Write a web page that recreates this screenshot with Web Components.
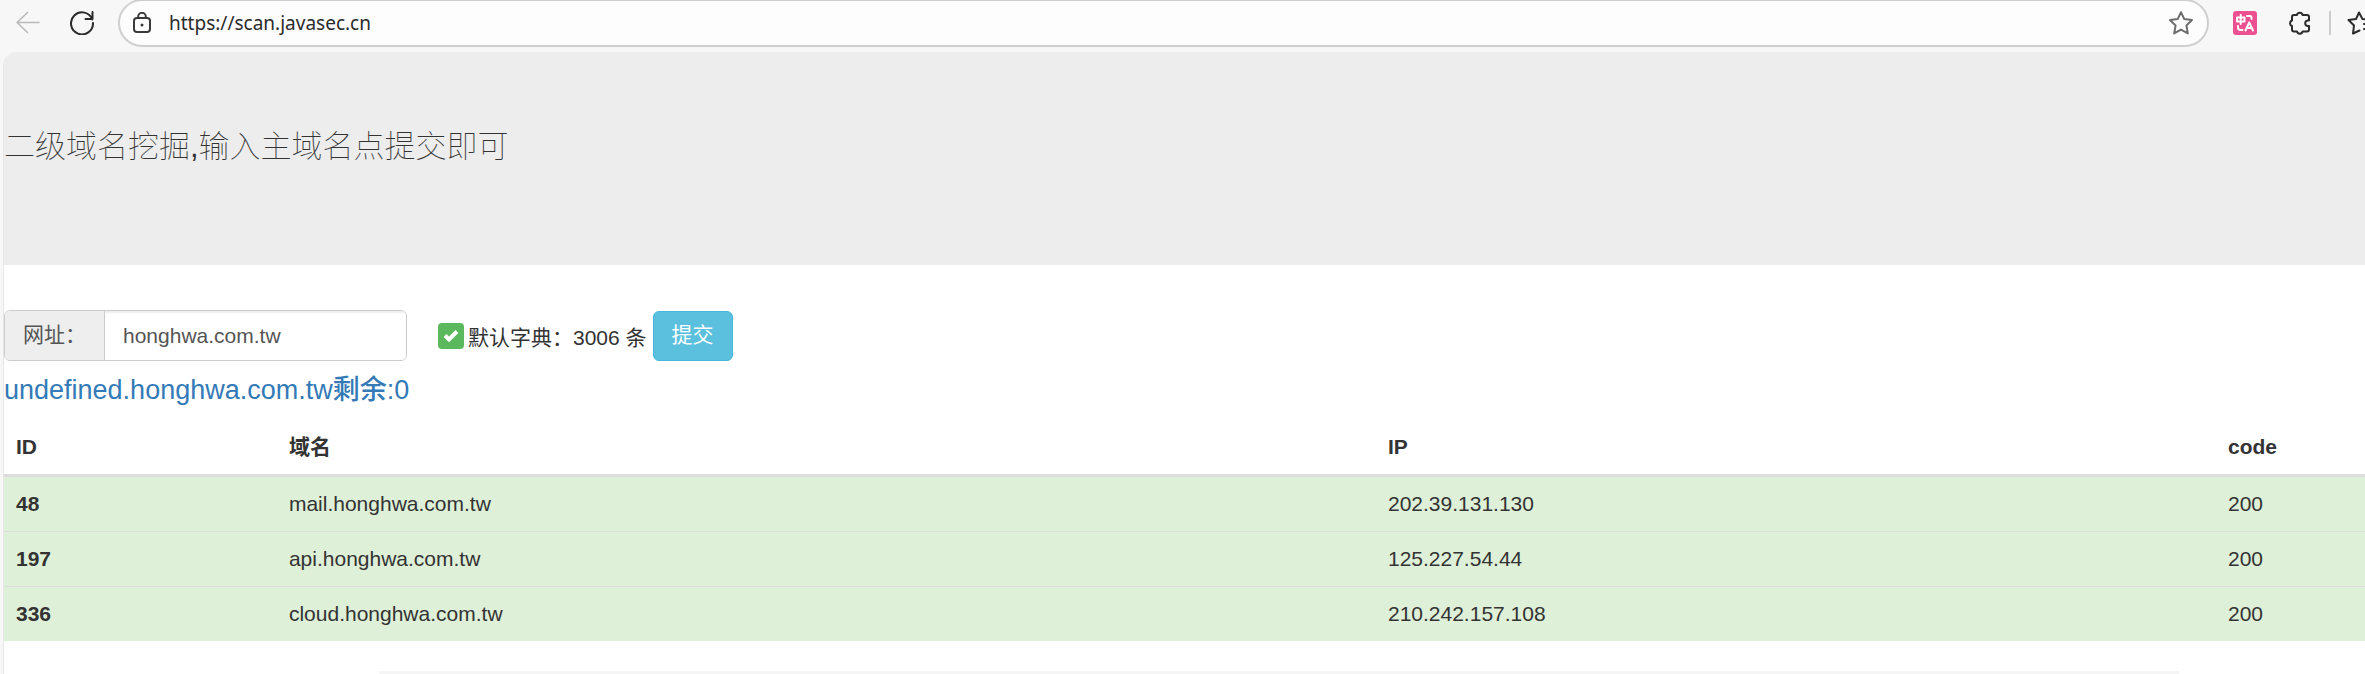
<!DOCTYPE html>
<html lang="zh-CN">
<head>
<meta charset="utf-8">
<title>scan.javasec.cn</title>
<style>
  html { background: #f7f7f7; }
  body {
    margin: 0;
    overflow-x: hidden;
    font-family: "Liberation Sans", "Noto Sans CJK SC", sans-serif;
    font-size: 21px;
    line-height: 30px;
    color: #333;
  }
</style>
</head>
<body>
<browser-bar url="https://scan.javasec.cn"></browser-bar>
<page-frame>
  <page-banner slot="banner">二级域名挖掘,输入主域名点提交即可</page-banner>
  <scan-form domain="honghwa.com.tw" entries="3006"></scan-form>
  <scan-status>undefined.honghwa.com.tw剩余:0</scan-status>
  <result-table></result-table>
  <page-foot></page-foot>
</page-frame>

<script>
class BrowserBar extends HTMLElement {
  connectedCallback() {
    this.attachShadow({ mode: "open" }).innerHTML = `
      <style>
        :host { display: block; overflow: hidden; background: #f7f7f7; }
        .bar { display: flex; align-items: center; height: 46px; padding: 0 0 6px 16px; }
        button { display: grid; place-items: center; flex: none; padding: 0; border: 0; background: none; color: #2b2b2b; }
        svg { display: block; fill: none; stroke: currentColor; stroke-width: 2; stroke-linecap: round; stroke-linejoin: round; }
        .back { color: #b9b9b9; margin-right: 30px; }
        .reload { margin-right: 24px; }
        .address { flex: 1; display: flex; align-items: center; box-sizing: border-box; height: 48px; min-width: 0; padding: 0 14px 0 13px; border: 2px solid #cfcfcf; border-radius: 24px; background: #fdfdfd; }
        input { flex: 1; min-width: 0; margin: 0; padding: 0 0 0 18px; border: 0; outline: 0; background: none; color: #2b2b2b; font: 19px/30px "Noto Sans", "Open Sans", sans-serif; }
        .lock { color: #3a3a3a; }
        .star { color: #6e6e6e; }
        .translate { margin: 0 30px 0 24px; }
        .divider { flex: none; width: 2px; height: 24px; margin: 0 16px 0 18px; background: #cdcdcd; }
        .favs { width: 18px; overflow: hidden; justify-items: start; }
      </style>
      <div class="bar">
        <button class="back" aria-label="Back"><svg width="24" height="24" viewBox="0 0 24 24"><path d="M23 11.500H1M11.500 1.500 1 11.500l10.500 10" stroke-width="1.500"/></svg></button>
        <button class="reload" aria-label="Reload"><svg width="24" height="24" viewBox="0 0 24 24"><path d="M22.300 8.500A11 11 0 1 0 23 12M22.500 1v7h-7"/></svg></button>
        <div class="address">
          <button class="lock" aria-label="Site information"><svg width="18" height="22" viewBox="0 0 18 22"><rect x="1" y="6" width="16" height="14" rx="3"/><path d="M5.200 6V4.600a3.800 3.800 0 0 1 7.600 0V6"/><circle cx="9" cy="13" r="1.500" fill="currentColor" stroke="none"/></svg></button>
          <input type="text" aria-label="Address" value="${this.getAttribute("url")}">
          <button class="star" aria-label="Add to favorites"><svg width="24" height="24" viewBox="0 0 24 24"><path d="M12 1.200 15.300 8.100 23 9.100 17.400 14.400 18.800 22.400 12 18.700 5.200 22.400 6.600 14.400 1 9.100 8.700 8.100Z"/></svg></button>
        </div>
        <button class="translate" aria-label="Translate"><svg width="24" height="24" viewBox="0 0 24 24"><rect width="24" height="24" rx="3" fill="#ec5090" stroke="none"/><g stroke="#fff"><path d="M4 6.500h7.500v4H4ZM7.700 4v9M14 5h3q1.500 0 1.500 2v1M5 15v1.500q0 2.500 3 2.500h1.500M12.500 19.500 16.200 11.500 20 19.500M14 17h4.500"/></g></svg></button>
        <button aria-label="Extensions"><svg width="24" height="24" viewBox="0 0 24 24"><path d="M7 4H10A2.900 2.900 0 0 1 15.600 4H20Q22 4 22 6V9.500H20.500A2.800 2.800 0 0 0 20.500 15H22V18.500Q22 20.500 20 20.500H15.600A2.900 2.900 0 0 1 10 20.500H7Q5 20.500 5 18.500V15A2.900 2.900 0 0 1 5 9.500V6Q5 4 7 4Z"/></svg></button>
        <span class="divider"></span>
        <button class="favs" aria-label="Favorites"><svg width="26" height="24" viewBox="0 0 26 24"><path d="M12.500 19.500 6 22.500 7 14.500 1.500 9 9 8.100 12 1.500 15.500 8.100 24 9M17 13h8M17 18h8"/></svg></button>
      </div>`;
  }
}
customElements.define("browser-bar", BrowserBar);

class PageFrame extends HTMLElement {
  connectedCallback() {
    this.attachShadow({ mode: "open" }).innerHTML = `
      <style>
        :host { display: block; margin-left: 3px; border-left: 1px solid #e6e6e6; border-top-left-radius: 14px; background: #fff; overflow: hidden; }
        main { display: flow-root; }
      </style>
      <slot name="banner"></slot>
      <main><slot></slot></main>`;
  }
}
customElements.define("page-frame", PageFrame);

class PageBanner extends HTMLElement {
  connectedCallback() {
    this.attachShadow({ mode: "open" }).innerHTML = `
      <style>
        :host { display: block; padding: 72px 0 96px; margin-bottom: 45px; background: #ededed; }
        h1 { margin: 0; font-size: 31px; line-height: 45px; font-weight: 100; font-family: "Liberation Sans", "Noto Sans CJK SC", sans-serif; }
      </style>
      <h1><slot></slot></h1>`;
  }
}
customElements.define("page-banner", PageBanner);

class ScanForm extends HTMLElement {
  connectedCallback() {
    this.attachShadow({ mode: "open" }).innerHTML = `
      <style>
        :host { display: block; }
        form { display: flex; align-items: center; }
        .group { display: flex; box-sizing: border-box; height: 51px; width: 403px; border: 1px solid #ccc; border-radius: 6px; overflow: hidden; }
        .group label { box-sizing: border-box; width: 100px; padding: 9px 0 0 18px; border-right: 1px solid #ccc; background: #eee; color: #555; }
        .group input { flex: 1; min-width: 0; box-sizing: border-box; padding: 0 18px; border: 0; outline: 0; background: #fff; box-shadow: inset 0 2px 2px rgba(0,0,0,.07); color: #555; font: inherit; }
        .check { display: flex; align-items: center; gap: 4px; margin: 0 6px 0 31px; padding-top: 4px; white-space: nowrap; }
        .box { display: grid; padding-bottom: 4px; }
        .box > * { grid-area: 1 / 1; }
        .box input { appearance: none; width: 26px; height: 26px; margin: 0; border-radius: 4px; background: #5cb85c; }
        .box svg { place-self: center; pointer-events: none; }
        button { box-sizing: border-box; height: 50px; width: 80px; padding: 0 0 2px; border: 1px solid #46b8da; border-radius: 6px; background: #5bc0de; color: #fff; font: inherit; }
      </style>
      <form onsubmit="return false">
        <div class="group">
          <label for="domain">网址：</label>
          <input id="domain" type="text" value="${this.getAttribute("domain")}">
        </div>
        <label class="check">
          <span class="box">
            <input type="checkbox" checked>
            <svg width="16" height="14" viewBox="0 0 16 14"><path d="M2 6.500 6 10.500 14 2.500" fill="none" stroke="#fff" stroke-width="4"/></svg>
          </span>
          <span>默认字典：${this.getAttribute("entries")} 条</span>
        </label>
        <button type="submit">提交</button>
      </form>`;
  }
}
customElements.define("scan-form", ScanForm);

class ScanStatus extends HTMLElement {
  connectedCallback() {
    this.attachShadow({ mode: "open" }).innerHTML = `
      <style>
        :host { display: block; padding: 14px 0 15px; color: #337ab7; }
        p { margin: 0; font-size: 27px; line-height: 30px; font-weight: 500; }
      </style>
      <p role="status"><slot></slot></p>`;
  }
}
customElements.define("scan-status", ScanStatus);

class ResultTable extends HTMLElement {
  connectedCallback() {
    const rows = [
      ["48", "mail.honghwa.com.tw", "202.39.131.130", "200"],
      ["197", "api.honghwa.com.tw", "125.227.54.44", "200"],
      ["336", "cloud.honghwa.com.tw", "210.242.157.108", "200"],
    ];
    this.attachShadow({ mode: "open" }).innerHTML = `
      <style>
        :host { display: block; }
        table { width: 100%; table-layout: fixed; border-spacing: 0; }
        .id { width: 11.56%; }
        .name { width: 46.55%; }
        .ip { width: 35.58%; }
        th, td { padding: 12px; text-align: left; }
        thead th { border-bottom: 3px solid #ddd; }
        tbody > tr > * { background: #dff0d8; border-bottom: 1px solid #ddd; }
        tbody > tr:last-child > * { border-bottom: 0; }
      </style>
      <table>
        <colgroup><col class="id"><col class="name"><col class="ip"><col></colgroup>
        <thead><tr><th scope="col">ID</th><th scope="col">域名</th><th scope="col">IP</th><th scope="col">code</th></tr></thead>
        <tbody>${rows.map(([id, ...cells]) => `<tr><th scope="row">${id}</th>${cells.map(c => `<td>${c}</td>`).join("")}</tr>`).join("")}</tbody>
      </table>`;
  }
}
customElements.define("result-table", ResultTable);

class PageFoot extends HTMLElement {
  connectedCallback() {
    this.attachShadow({ mode: "open" }).innerHTML = `
      <style>
        :host { display: block; margin: 30px 186px 0 375px; height: 3px; background: #f5f5f5; }
      </style>`;
  }
}
customElements.define("page-foot", PageFoot);
</script>
</body>
</html>
